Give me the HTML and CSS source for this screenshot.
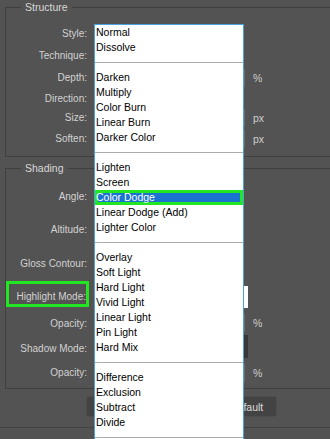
FILE: index.html
```html
<!DOCTYPE html>
<html lang="en">
<head>
    <meta charset="UTF-8">
    <meta name="viewport" content="width=device-width, initial-scale=1.0">
    <title>Layer Style - Bevel &amp; Emboss</title>
    <link rel="stylesheet" href="styles.css">
</head>
<body>
    <div class="dialog">
        <fieldset class="group structure">
            <legend>Structure</legend>
            <div class="fields">
                <div class="label">Style:</div>
                <div class="ctrl"><div class="select"></div></div>
                <div class="unit"></div>

                <div class="label">Technique:</div>
                <div class="ctrl"><div class="select"></div></div>
                <div class="unit"></div>

                <div class="label">Depth:</div>
                <div class="ctrl"><div class="slider"></div><div class="num"></div></div>
                <div class="unit">%</div>

                <div class="label">Direction:</div>
                <div class="ctrl"></div>
                <div class="unit"></div>

                <div class="label">Size:</div>
                <div class="ctrl"><div class="slider"></div><div class="num"></div></div>
                <div class="unit">px</div>

                <div class="label">Soften:</div>
                <div class="ctrl"><div class="slider"></div><div class="num"></div></div>
                <div class="unit">px</div>
            </div>
        </fieldset>

        <fieldset class="group shading">
            <legend>Shading</legend>
            <div class="fields">
                <div class="label">Angle:</div>
                <div class="ctrl"></div>
                <div class="unit"></div>

                <div class="label">Altitude:</div>
                <div class="ctrl"></div>
                <div class="unit"></div>

                <div class="label">Gloss Contour:</div>
                <div class="ctrl"></div>
                <div class="unit"></div>

                <div class="label"><span class="marked">Highlight Mode:</span></div>
                <div class="ctrl"><div class="swatch white"></div></div>
                <div class="unit"></div>

                <div class="label">Opacity:</div>
                <div class="ctrl"><div class="slider"></div><div class="num"></div></div>
                <div class="unit">%</div>

                <div class="label">Shadow Mode:</div>
                <div class="ctrl"><div class="swatch black"></div></div>
                <div class="unit"></div>

                <div class="label">Opacity:</div>
                <div class="ctrl"><div class="slider"></div><div class="num"></div></div>
                <div class="unit">%</div>
            </div>
        </fieldset>

        <div class="buttons">
            <button class="btn btn-make">Make Default</button>
            <button class="btn">Reset to Default</button>
        </div>
        <div class="footer"></div>
    </div>

    <!-- Blend mode popup, opened from the Highlight Mode select -->
    <ul class="blend-menu">
        <li>Normal</li>
        <li>Dissolve</li>
        <li class="sep"></li>
        <li>Darken</li>
        <li>Multiply</li>
        <li>Color Burn</li>
        <li>Linear Burn</li>
        <li>Darker Color</li>
        <li class="sep"></li>
        <li>Lighten</li>
        <li>Screen</li>
        <li class="active">Color Dodge</li>
        <li>Linear Dodge (Add)</li>
        <li>Lighter Color</li>
        <li class="sep"></li>
        <li>Overlay</li>
        <li>Soft Light</li>
        <li>Hard Light</li>
        <li>Vivid Light</li>
        <li>Linear Light</li>
        <li>Pin Light</li>
        <li>Hard Mix</li>
        <li class="sep"></li>
        <li>Difference</li>
        <li>Exclusion</li>
        <li>Subtract</li>
        <li>Divide</li>
        <li class="sep"></li>
    </ul>
</body>
</html>
```

FILE: styles.css
```css
body {
    font-family: "Liberation Sans", Arial, sans-serif;
    margin: 0;
    padding: 0;
    background-color: #535353;
    color: #d4d4d4;
    overflow: hidden;
}

.dialog {
    padding-top: 1px;
}

.group {
    width: 400px;
    margin: 0 0 0 5px;
    padding: 8px 0 6px 0;
    border: 1px solid #3f3f3f;
    min-inline-size: 0;
}

.group legend {
    margin-left: 15px;
    padding: 0 4px;
    font-size: 10.5px;
    line-height: 13px;
    color: #d8d8d8;
}

.shading {
    margin-top: 5px;
    padding-top: 5px;
    padding-bottom: 7px;
}

.fields {
    display: grid;
    grid-template-columns: 81px 162px auto;
    align-items: center;
}

.structure .fields {
    grid-template-rows: 22px 22px 23px 19px 19px 23px;
}

.shading .fields {
    grid-template-rows: 32px 35px 33px 34px 18px 32px 17px;
}

.label {
    display: flex;
    justify-content: flex-end;
    align-items: center;
    font-size: 10px;
    color: #d2d2d2;
    white-space: nowrap;
}

.marked {
    border: 3px solid #22e622;
    padding: 7px 0 1px 8px;
    margin-right: -2px;
    margin-bottom: 6px;
    line-height: 12px;
}

.ctrl {
    display: flex;
    justify-content: flex-end;
    align-items: center;
    gap: 6px;
}

.select {
    width: 130px;
    height: 18px;
    margin-right: 20px;
    background-color: #454545;
}

.slider {
    width: 90px;
    height: 2px;
    background-color: #3a3a3a;
}

.num {
    width: 40px;
    height: 16px;
    margin-right: 4px;
    background-color: #474747;
    border: 1px solid #6a6a6a;
}

.swatch {
    width: 22px;
    height: 22px;
    margin-right: 1px;
}

.swatch.white {
    background-color: #ffffff;
}

.swatch.black {
    height: 23px;
    margin-top: -3px;
    background-color: #383838;
}

.unit {
    padding-left: 4px;
    font-size: 10.5px;
    color: #cfcfcf;
}

.buttons {
    display: flex;
    gap: 4px;
    margin-top: 7px;
    padding-left: 86px;
}

.btn {
    height: 21px;
    padding: 0 13px;
    background-color: #434343;
    color: #dcdcdc;
    border: 1px solid #4d4d4d;
    border-radius: 3px;
    font-family: inherit;
    font-size: 10.5px;
    white-space: nowrap;
}

.btn-make {
    width: 84px;
    padding: 0 5px;
}

.footer {
    margin-top: 10px;
    border-top: 1px solid #424242;
}

.blend-menu {
    position: absolute;
    top: 24px;
    left: 94px;
    width: 148px;
    margin: 0;
    padding: 0;
    list-style: none;
    background-color: #ffffff;
    border: 1px solid #48a3e0;
    color: #000000;
    font-size: 10.5px;
    line-height: 15px;
}

.blend-menu li {
    height: 15px;
    padding-left: 1px;
    white-space: nowrap;
}

.blend-menu .sep {
    height: 7px;
    margin-bottom: 7px;
    border-bottom: 1px solid #ababab;
}

.blend-menu .active {
    background-color: #1a73d1;
    color: #ffffff;
    box-shadow: inset 0 0 0 3px #22e622;
}
```
